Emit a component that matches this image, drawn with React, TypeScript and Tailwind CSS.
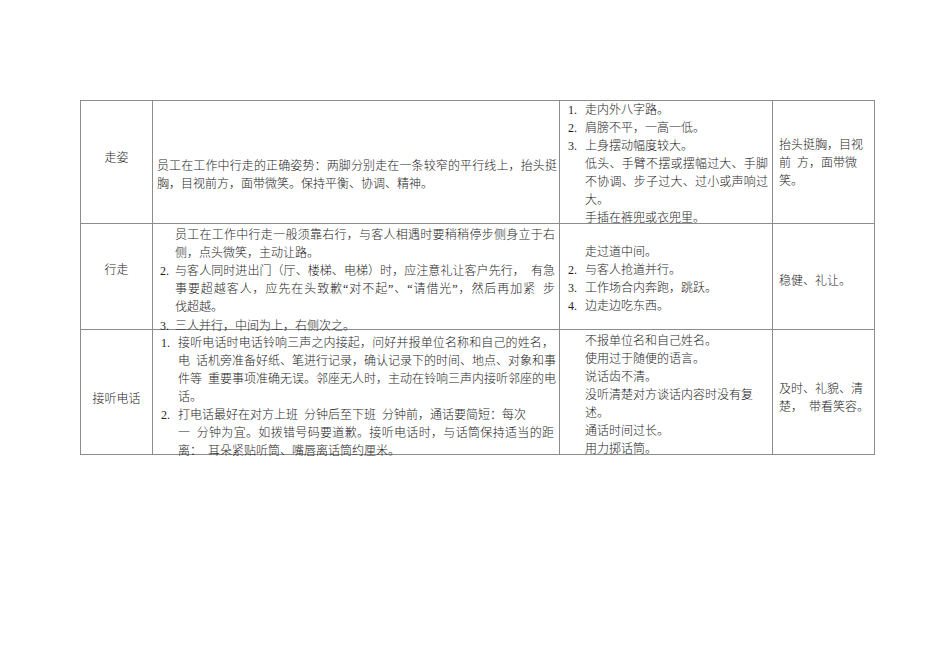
type Line = { n?: string; t: string; j?: boolean; gap?: boolean };

function Lines({ lines, numW }: { lines: Line[]; numW: string }) {
  return (
    <div>
      {lines.map((l, i) => (
        <div key={i} className={l.gap ? "flex mt-px" : "flex"}>
          <span className={numW + " shrink-0"}>{l.n ?? ""}</span>
          <div className={l.j ? "flex-1 whitespace-pre text-justify [text-align-last:justify]" : "flex-1 whitespace-pre"}>
            {l.t}
          </div>
        </div>
      ))}
    </div>
  );
}

const badWalk: Line[] = [
  { n: "1.", t: "走内外八字路。" },
  { n: "2.", t: "肩膀不平，一高一低。" },
  { n: "3.", t: "上身摆动幅度较大。" },
  { t: "低头、手臂不摆或摆幅过大、手脚", j: true },
  { t: "不协调、步子过大、过小或声响过", j: true },
  { t: "大。" },
  { t: "手插在裤兜或衣兜里。" },
];

const goWalk: Line[] = [
  { t: "员工在工作中行走一般须靠右行，与客人相遇时要稍稍停步侧身立于右", j: true },
  { t: "侧，点头微笑，主动让路。" },
  { n: "2.", t: "与客人同时进出门（厅、楼梯、电梯）时，应注意礼让客户先行，\u2002有急", j: true },
  { t: "事要超越客人，应先在头致歉“对不起”、“请借光”，然后再加紧\u2002步", j: true },
  { t: "伐超越。" },
  { n: "3.", t: "三人并行，中间为上，右侧次之。", gap: true },
];

const badGo: Line[] = [
  { t: "走过道中间。" },
  { n: "2.", t: "与客人抢道并行。" },
  { n: "3.", t: "工作场合内奔跑，跳跃。" },
  { n: "4.", t: "边走边吃东西。" },
];

const phone: Line[] = [
  { n: "1.", t: "接听电话时电话铃响三声之内接起，问好并报单位名称和自己的姓名，", j: true },
  { t: "电\u2002话机旁准备好纸、笔进行记录，确认记录下的时间、地点、对象和事", j: true },
  { t: "件等\u2002重要事项准确无误。邻座无人时，主动在铃响三声内接听邻座的电", j: true },
  { t: "话。" },
  { n: "2.", t: "打电话最好在对方上班\u2002分钟后至下班\u2002分钟前，通话要简短：每次" },
  { t: "一\u2002分钟为宜。如拨错号码要道歉。接听电话时，与话筒保持适当的距", j: true },
  { t: "离：\u2002耳朵紧贴听筒、嘴唇离话筒约厘米。" },
];

const badPhone: Line[] = [
  { t: "不报单位名和自己姓名。" },
  { t: "使用过于随便的语言。" },
  { t: "说话齿不清。" },
  { t: "没听清楚对方谈话内容时没有复" },
  { t: "述。" },
  { t: "通话时间过长。" },
  { t: "用力掷话筒。" },
];

export default function App() {
  return (
    <div className="w-[950px] h-[672px] bg-white pt-[100px] pl-[80px] text-[12px] leading-[18px] text-[#1e1e1e] font-light [font-family:'Liberation_Serif','Noto_Sans_CJK_SC',serif]">
      <div className="grid grid-cols-[72px_407px_213px_102px] w-[795px] border-t border-l border-[#8c8c8c]">
        {/* 走姿 */}
        <div className="h-[123px] border-r border-b border-[#8c8c8c] pt-[48px] text-center">走姿</div>
        <div className="h-[123px] border-r border-b border-[#8c8c8c] pt-[56px] pl-[4px] pr-[2px]">
          <div className="whitespace-pre text-justify [text-align-last:justify]">员工在工作中行走的正确姿势：两脚分别走在一条较窄的平行线上，抬头挺</div>
          <div>胸，目视前方，面带微笑。保持平衡、协调、精神。</div>
        </div>
        <div className="h-[123px] border-r border-b border-[#8c8c8c] pl-[8px] pr-[4px]">
          <Lines lines={badWalk} numW="w-[17px]" />
        </div>
        <div className="h-[123px] border-r border-b border-[#8c8c8c] pt-[35px] pl-[6px]">
          <div>抬头挺胸，目视</div>
          <div className="whitespace-pre">{"前\u2002方，面带微"}</div>
          <div>笑。</div>
        </div>

        {/* 行走 */}
        <div className="h-[106px] border-r border-b border-[#8c8c8c] pt-[37px] text-center">行走</div>
        <div className="h-[106px] border-r border-b border-[#8c8c8c] pt-[2px] pl-[7px] pr-[4px]">
          <Lines lines={goWalk} numW="w-[15px]" />
        </div>
        <div className="h-[106px] border-r border-b border-[#8c8c8c] pt-[19px] pl-[8px] pr-[4px]">
          <Lines lines={badGo} numW="w-[17px]" />
        </div>
        <div className="h-[106px] border-r border-b border-[#8c8c8c] pt-[48px] pl-[6px]">稳健、礼让。</div>

        {/* 接听电话 */}
        <div className="h-[125px] border-r border-b border-[#8c8c8c] pt-[60px] text-center">接听电话</div>
        <div className="h-[125px] border-r border-b border-[#8c8c8c] pt-[4px] pl-[8px] pr-[5px]">
          <Lines lines={phone} numW="w-[17px]" />
        </div>
        <div className="h-[125px] border-r border-b border-[#8c8c8c] pt-[2px] pl-[8px] pr-[4px]">
          <Lines lines={badPhone} numW="w-[17px]" />
        </div>
        <div className="h-[125px] border-r border-b border-[#8c8c8c] pt-[50px] pl-[6px]">
          <div>及时、礼貌、清</div>
          <div className="whitespace-pre">{"楚，\u2002带看笑容。"}</div>
        </div>
      </div>
    </div>
  );
}
